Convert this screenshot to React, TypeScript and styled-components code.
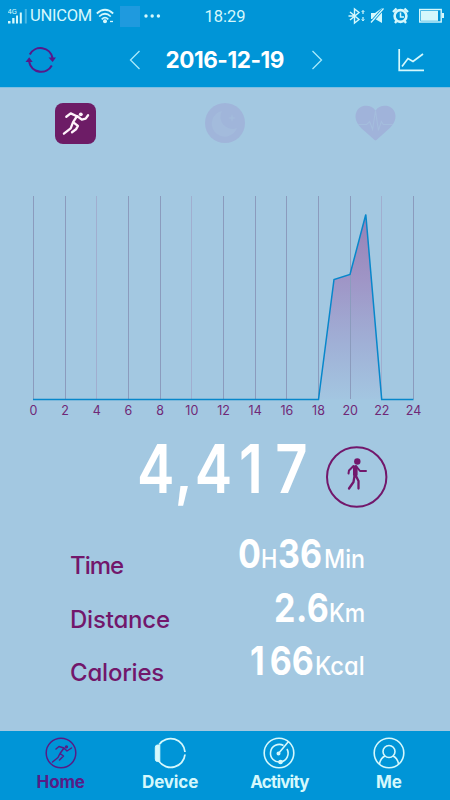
import React from "react";
import styled, { createGlobalStyle } from "styled-components";

const BLUE = "#0095d7";
const SKY = "#a3c8e1";
const PURPLE = "#72176b";
const ICE = "#d5f8fc";

const GlobalStyle = createGlobalStyle`
  * { box-sizing: border-box; }
  body { margin: 0; background: ${SKY}; }
  svg { display: block; }
`;

const Screen = styled.div`
  width: 450px;
  height: 800px;
  display: flex;
  flex-direction: column;
  overflow: hidden;
  background: ${SKY};
  font-family: Inter, "Liberation Sans", sans-serif;
  font-feature-settings: "cv11";
`;

const StatusBar = styled.div`
  height: 32px;
  display: grid;
  grid-template-columns: 1fr auto 1fr;
  align-items: center;
  padding: 0 6px 0 8px;
  background: ${BLUE};
  color: ${ICE};
  font-family: Roboto, sans-serif;
`;

const StatusGroup = styled.div<{ $end?: boolean }>`
  display: flex;
  align-items: center;
  justify-content: ${(p) => (p.$end ? "flex-end" : "flex-start")};
`;

const Carrier = styled.span`
  width: 63px;
  margin: 0 3px 0 2px;
  font-size: 16.5px;
  line-height: 20px;
  letter-spacing: -0.25px;
`;

const Clock = styled.span`
  font-size: 16.5px;
  line-height: 20px;
  padding-top: 2px;
  margin-right: 2px;
`;

const Notice = styled.span`
  width: 20px;
  height: 21px;
  margin: 0 4px 0 6px;
  background: #1f9ade;
`;

const Header = styled.header`
  height: 55px;
  flex: none;
  display: flex;
  align-items: center;
  justify-content: space-between;
  padding: 0 25px 0 24px;
  background: ${BLUE};
`;

const DateNav = styled.div`
  display: flex;
  align-items: center;
  gap: 25px;
  margin-right: 5px;
`;

const DateText = styled.span`
  width: 120px;
  font-size: 22.5px;
  line-height: 24px;
  font-weight: 700;
  letter-spacing: -0.45px;
  white-space: nowrap;
  color: #fff;
`;

const Tabs = styled.div`
  display: grid;
  grid-template-columns: repeat(3, 1fr);
  justify-items: center;
  align-items: center;
  height: 72px;
  padding-bottom: 1px;
  border-top: 1px solid #7fbfe2;
`;

const ActiveTab = styled.div`
  width: 41px;
  height: 41px;
  display: grid;
  place-items: center;
  border-radius: 8px;
  background: #6d1c66;
  color: #fff3fb;
`;

const ChartBox = styled.div`
  height: 270px;
  padding-top: 31px;
`;

const Steps = styled.section`
  display: flex;
  align-items: center;
  justify-content: flex-end;
  height: 96px;
  padding-right: 62px;
`;

const StepCount = styled.span`
  width: 189px;
  font-size: 67px;
  line-height: 80px;
  font-weight: 600;
  letter-spacing: 2.5px;
  margin-top: -16px;
  transform: scaleX(0.84);
  transform-origin: left;
  white-space: nowrap;
  color: #fff;
`;

const Tracked = styled.span<{ $track: number }>`
  letter-spacing: ${(p) => p.$track}px;
`;

const Stats = styled.section`
  display: grid;
  grid-template-rows: repeat(3, 53.7px);
  padding: 6px 85px 0 70px;
`;

const StatRow = styled.div`
  display: flex;
  justify-content: space-between;
`;

const StatLabel = styled.span<{ $track: number }>`
  padding-top: 20px;
  font-size: 24px;
  line-height: 30px;
  font-weight: 500;
  letter-spacing: ${(p) => p.$track}px;
  color: ${PURPLE};
`;

const StatValue = styled.span`
  display: flex;
  align-items: baseline;
  line-height: 46px;
  color: #fff;
`;

const Figure = styled.span<{ $width: number; $track?: number }>`
  width: ${(p) => p.$width}px;
  font-size: 39.5px;
  font-weight: 700;
  letter-spacing: ${(p) => p.$track ?? 0}px;
  white-space: nowrap;
  transform: scaleX(0.86);
  transform-origin: left;
`;

const Unit = styled.span<{ $width: number; $scale: number }>`
  width: ${(p) => p.$width}px;
  font-size: 25.5px;
  font-weight: 500;
  white-space: nowrap;
  transform: scaleX(${(p) => p.$scale});
  transform-origin: left;
`;

const NavBar = styled.nav`
  height: 69px;
  flex: none;
  margin-top: auto;
  display: grid;
  grid-template-columns: repeat(4, 109.4px);
  padding: 6px 0 0 6px;
  background: ${BLUE};
`;

const NavItem = styled.div<{ $active?: boolean }>`
  display: flex;
  flex-direction: column;
  align-items: center;
  gap: 1px;
  color: ${(p) => (p.$active ? "#571c86" : ICE)};
`;

const NavLabel = styled.span<{ $track?: number }>`
  font-size: 17px;
  line-height: 24px;
  font-weight: 700;
  letter-spacing: ${(p) => p.$track ?? -0.15}px;
`;

const Runner = () => (
  <svg width="29" height="29" viewBox="0 0 30 30" fill="none" stroke="currentColor" strokeWidth="2.4" strokeLinecap="round" strokeLinejoin="round">
    <path d="M5.500 8 10 4.500 16.500 7.500 12.500 13.500 17.500 17.500 15.500 21 11.400 24M17 7.500 21.500 11 25.500 10 28 6.500M12.500 13.500 10 20 3 25.500" />
    <circle cx="20.500" cy="5.500" r="2" fill="currentColor" stroke="none" />
  </svg>
);

const SignalIcon = () => (
  <svg width="20" height="20" viewBox="0 0 20 20">
    <g fill={ICE}>
      <rect x="0" y="15" width="2.500" height="2.500" />
      <rect x="4.200" y="12" width="2.300" height="5.500" />
      <rect x="8" y="9.500" width="2" height="8" />
      <rect x="11.800" y="6.500" width="2" height="11" />
      <rect x="16.800" y="3" width="2" height="14.500" opacity=".35" />
    </g>
    <text x="-.4" y="8.300" fontSize="7.500" fontFamily="Roboto, sans-serif" fill={ICE}>4G</text>
  </svg>
);

const WifiIcon = () => (
  <svg width="18" height="16" viewBox="0 0 18 16" fill="none" stroke={ICE} strokeWidth="1.700">
    <path d="M.8 5.500Q9-2 17.200 5.500M3.200 8.500Q9 3 14.800 8.500M5.700 11.300Q9 8 12.300 11.300" />
    <circle cx="9" cy="13.300" r="2" fill={ICE} stroke="none" />
    <path d="M14 13.500h3" strokeWidth="1.300" />
  </svg>
);

const MoreIcon = () => (
  <svg width="17" height="4" viewBox="0 0 17 4" fill={ICE}>
    <circle cx="2" cy="2" r="1.700" />
    <circle cx="8.200" cy="2" r="1.700" />
    <circle cx="14.400" cy="2" r="1.700" />
  </svg>
);

const StatusIcons = () => (
  <svg width="96" height="18" viewBox="348 7 96 18" fill="none" stroke={ICE} strokeWidth="1.400">
    <path d="m350 12 9 7.500-4.500 3.500V9l4.500 3.500-9 7.500M348.500 16h5" />
    <path d="M363 14v-3.200M363 17v4" strokeWidth="1.200" />
    <path d="m361.600 12 1.400-1.600 1.400 1.600M361.600 19.300l1.400 1.600 1.400-1.600" strokeWidth=".9" />
    <path d="M371 13h4l7-5v15l-7-4h-4z" fill={ICE} stroke="none" />
    <path d="m371 22.500 12.500-14" stroke={BLUE} strokeWidth="3" />
    <path d="m371 22.500 12.500-14" strokeWidth="1.300" />
    <circle cx="400.500" cy="16" r="5.900" strokeWidth="2.600" />
    <path d="M400.500 12.500V17h3.500" strokeWidth="1.500" />
    <path d="m393 12 3.500-3.500M408 12l-3.500-3.500M396.500 21l-1.500 2M404.500 21l1.500 2" strokeWidth="2.300" />
    <rect x="419.700" y="9.500" width="21.500" height="12.500" />
    <rect x="421" y="10.800" width="17" height="10" fill={ICE} stroke="none" />
    <rect x="442" y="13" width="2" height="5" fill={ICE} stroke="none" />
  </svg>
);

const SyncIcon = () => (
  <svg width="34" height="28" viewBox="24 46 34 28" fill="none" stroke="#57198a" strokeWidth="2.100">
    <path d="M29.800 54.500A12.200 12.200 0 0 1 52.500 58M51.800 65.500A12.200 12.200 0 0 1 29.200 62" />
    <path d="m48.500 57.500 7.500 0-3.400 4.500zM25.500 62l7.200 0-3.500-4.800z" fill="#57198a" stroke="none" />
  </svg>
);

const Chevron = ({ right }: { right?: boolean }) => (
  <svg width="12" height="20" viewBox="0 0 12 20" fill="none" stroke="#a8e9fa" strokeWidth="1.300">
    <path d={right ? "m1.500 1 9 9-9 9" : "m10.500 1-9 9 9 9"} />
  </svg>
);

const TrendIcon = () => (
  <svg width="27" height="24" viewBox="0 0 27 24" fill="none" stroke={ICE} strokeWidth="1.700">
    <path d="M1.200 1v21.300H26M4 18.500 10 10.500 15 13.500 25 6" />
  </svg>
);

const MoonIcon = () => (
  <svg width="40" height="40" viewBox="0 0 40 40">
    <circle cx="20" cy="20" r="20" fill="#a0b5da" />
    <path d="M17 8a13 13 0 1 0 15 17A12 12 0 0 1 17 8z" fill="#a3bbdc" />
    <path d="m27 11 1 3 3 1-3 1-1 3-1-3-3-1 3-1z" fill="#a3bbdc" />
  </svg>
);

const HeartIcon = () => (
  <svg width="41" height="37" viewBox="0 0 42 38">
    <path d="M21 6C17-1 5-1 1.500 7-2 15 4 22 10 27L20 36q1 1 2 0l10-9C38 22 44 15 40.500 7 37-1 25-1 21 6z" fill="#a0b3da" />
    <path d="M3 20h9l3-3 3 8 3-19 3 20 3-9 2 3h10" fill="none" stroke="#a4bddd" strokeWidth="1.100" />
  </svg>
);

const HOURS = Array.from({ length: 13 }, (_, i) => i * 2);
const xAt = (hour: number) => 33.5 + hour * 15.833;
const isFaint = (hour: number) => hour === 4 || hour === 10 || hour === 22;

const DayChart = () => (
  <svg width="450" height="230" viewBox="0 190 450 230">
    <defs>
      <linearGradient id="area" x1="0" y1="0" x2="0" y2="1">
        <stop offset="0" stopColor="#9581b5" />
        <stop offset=".35" stopColor="#9f95c6" />
        <stop offset=".7" stopColor="#a0b0d6" />
        <stop offset="1" stopColor="#a3c6e1" />
      </linearGradient>
    </defs>
    <path d="M318.500 399.500 334 279.500 350 274.500 365.800 214.500 381.700 399.500z" fill="url(#area)" />
    {HOURS.map((hour) => (
      <React.Fragment key={hour}>
        <line
          x1={Math.floor(xAt(hour)) + 0.5}
          x2={Math.floor(xAt(hour)) + 0.5}
          y1="196"
          y2="399"
          stroke={isFaint(hour) ? "#a0aecf" : "#8b9bbd"}
        />
        <text x={xAt(hour)} y="415" textAnchor="middle" fontSize="12.500" fill="#702877">{hour}</text>
      </React.Fragment>
    ))}
    <path d="M33 399.500H318.500L334 279.500 350 274.500 365.800 214.500 381.700 399.500H413.500" fill="none" stroke="#0787cb" strokeWidth="1.500" />
  </svg>
);

const WalkerBadge = () => (
  <svg width="62" height="62" viewBox="326 446 62 62" fill="none" stroke={PURPLE} strokeLinecap="round" strokeLinejoin="round">
    <circle cx="356.700" cy="477" r="29.700" strokeWidth="2" />
    <circle cx="357.300" cy="461.500" r="3.200" fill={PURPLE} stroke="none" />
    <path d="M355.300 467.500v7" strokeWidth="4.600" />
    <path d="m353.500 466-4.500 4.500-.5 3M356 466l4 5h6" strokeWidth="2" />
    <path d="m354.500 476-1 6-4.500 6.500M356 476l2.500 5v7.500" strokeWidth="2.300" />
  </svg>
);

const HomeIcon = () => (
  <svg width="32" height="32" viewBox="0 0 32 32" fill="none" stroke="currentColor" strokeWidth="1.500" strokeLinecap="round" strokeLinejoin="round">
    <circle cx="16" cy="16" r="14.800" />
    <path d="m11 12 3-2.500 5 1.500-4 5.500 3.500 2.500-4 4M19 11l3 3 4.500-3M15 16.500l-2 4-5.500 4.500" />
    <circle cx="21.500" cy="9.800" r=".9" />
  </svg>
);

const DeviceIcon = () => (
  <svg width="34" height="32" viewBox="0 0 34 32" fill="none" stroke="currentColor">
    <path d="M6.200 7.500A14.300 14.300 0 0 1 32 15M32 17.500A14.300 14.300 0 0 1 6.200 24.500" strokeWidth="1.800" />
    <path d="M6.800 8v16.500H4.300Q2.300 24.500 2.300 22V10.500Q2.300 8 4.300 8z" fill="currentColor" />
  </svg>
);

const ActivityIcon = () => (
  <svg width="32" height="32" viewBox="0 0 32 32" fill="none" stroke="currentColor" strokeWidth="1.600">
    <circle cx="16" cy="16" r="14.800" />
    <path d="M20.500 8.500A8.800 8.800 0 1 0 24 12M15.500 16.500 25.500 4.500" />
    <circle cx="15.500" cy="16.500" r="1.200" fill="currentColor" />
    <circle cx="17.500" cy="25" r="1.500" fill="currentColor" />
  </svg>
);

const MeIcon = () => (
  <svg width="32" height="32" viewBox="0 0 32 32" fill="none" stroke="currentColor" strokeWidth="1.600">
    <circle cx="16" cy="16" r="14.800" />
    <circle cx="16" cy="14.500" r="6" />
    <path d="M6.500 27q1-6 5.500-8M25.500 27q-1-6-5.500-8" />
  </svg>
);

export default function App() {
  return (
    <Screen>
      <GlobalStyle />
      <StatusBar>
        <StatusGroup>
          <SignalIcon />
          <Carrier>UNICOM</Carrier>
          <WifiIcon />
          <Notice />
          <MoreIcon />
        </StatusGroup>
        <Clock>18:29</Clock>
        <StatusGroup $end>
          <StatusIcons />
        </StatusGroup>
      </StatusBar>
      <Header>
        <SyncIcon />
        <DateNav>
          <Chevron />
          <DateText>2016-12-19</DateText>
          <Chevron right />
        </DateNav>
        <TrendIcon />
      </Header>
      <Tabs>
        <ActiveTab>
          <Runner />
        </ActiveTab>
        <MoonIcon />
        <HeartIcon />
      </Tabs>
      <ChartBox>
        <DayChart />
      </ChartBox>
      <Steps>
        <StepCount>
          4,<Tracked $track={8}>4</Tracked><Tracked $track={15}>1</Tracked>7
        </StepCount>
        <WalkerBadge />
      </Steps>
      <Stats>
        <StatRow>
          <StatLabel $track={-1}>Time</StatLabel>
          <StatValue>
            <Figure $width={23.5}>0</Figure>
            <Unit $width={16.5} $scale={0.86}>H</Unit>
            <Figure $width={46.5}>36</Figure>
            <Unit $width={41} $scale={0.91}>Min</Unit>
          </StatValue>
        </StatRow>
        <StatRow>
          <StatLabel $track={-0.2}>Distance</StatLabel>
          <StatValue>
            <Figure $width={55} $track={0.6}>2.6</Figure>
            <Unit $width={36} $scale={0.9}>Km</Unit>
          </StatValue>
        </StatRow>
        <StatRow>
          <StatLabel $track={-0.2}>Calories</StatLabel>
          <StatValue>
            <Figure $width={65}><Tracked $track={6}>1</Tracked>66</Figure>
            <Unit $width={50.5} $scale={0.93}>Kcal</Unit>
          </StatValue>
        </StatRow>
      </Stats>
      <NavBar>
        <NavItem $active>
          <HomeIcon />
          <NavLabel>Home</NavLabel>
        </NavItem>
        <NavItem>
          <DeviceIcon />
          <NavLabel>Device</NavLabel>
        </NavItem>
        <NavItem>
          <ActivityIcon />
          <NavLabel $track={-0.8}>Activity</NavLabel>
        </NavItem>
        <NavItem>
          <MeIcon />
          <NavLabel>Me</NavLabel>
        </NavItem>
      </NavBar>
    </Screen>
  );
}
